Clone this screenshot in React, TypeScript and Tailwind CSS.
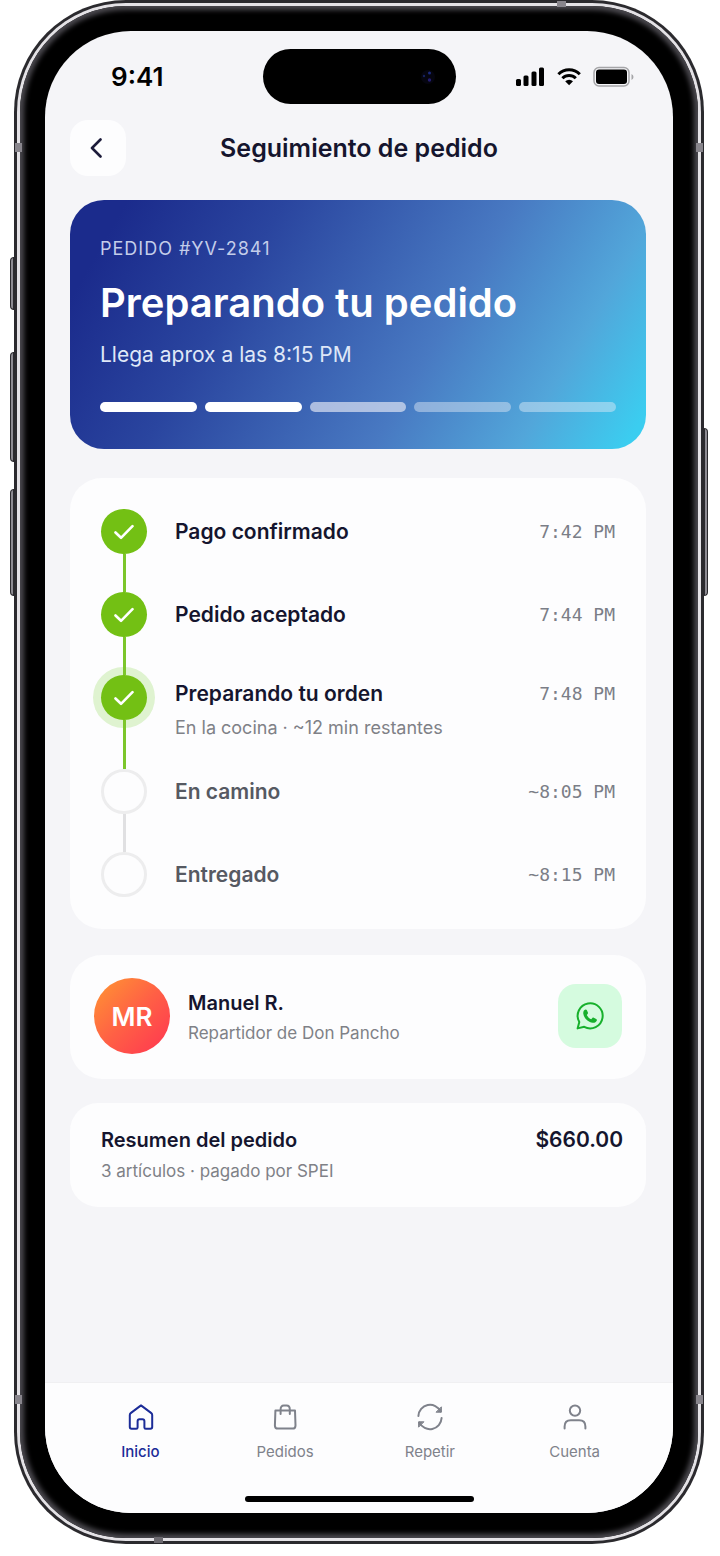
import type { ReactNode } from "react";

type Step = {
  title: string;
  time: string;
  status: "done" | "active" | "pending";
  detail?: string;
};

const steps: Step[] = [
  { title: "Pago confirmado", time: "7:42 PM", status: "done" },
  { title: "Pedido aceptado", time: "7:44 PM", status: "done" },
  { title: "Preparando tu orden", time: "7:48 PM", status: "active", detail: "En la cocina · ~12 min restantes" },
  { title: "En camino", time: "~8:05 PM", status: "pending" },
  { title: "Entregado", time: "~8:15 PM", status: "pending" },
];

const progress = ["bg-white", "bg-white", "bg-[#dde3f2]/70", "bg-[#d5e2f2]/50", "bg-[#d5e8f5]/50"];

const tabs = [
  { label: "Inicio", icon: <HomeIcon />, active: true },
  { label: "Pedidos", icon: <BagIcon />, active: false },
  { label: "Repetir", icon: <RepeatIcon />, active: false },
  { label: "Cuenta", icon: <UserIcon />, active: false },
];

function TabSvg({ children }: { children: ReactNode }) {
  return (
    <svg
      viewBox="0 0 28 28"
      className="w-7 h-7"
      fill="none"
      stroke="currentColor"
      strokeWidth="2"
      strokeLinecap="round"
      strokeLinejoin="round"
      aria-hidden="true"
    >
      {children}
    </svg>
  );
}

function HomeIcon() {
  return (
    <TabSvg>
      <path d="M15 2.4 5 9.9Q3.800 10.800 3.800 12V24q0 1.800 1.800 1.800h4.600q1.400 0 1.400-1.400V18.200q0-1.900 1.900-1.900h3q1.900 0 1.900 1.900v6.200q0 1.400 1.400 1.400h4.600Q26.200 25.800 26.200 24V12q0-1.200-1.200-2.100Z" />
    </TabSvg>
  );
}

function BagIcon() {
  return (
    <TabSvg>
      <path d="M4.400 7.600h19.600l.5 14.800q0 3.200-3 3.200H6.900q-3 0-3-3.200ZM9.600 11V6.400q0-3.800 3.200-3.800h2.800q3.200 0 3.200 3.800V11" />
    </TabSvg>
  );
}

function RepeatIcon() {
  return (
    <TabSvg>
      <path d="M2.400 13A11.700 11.700 0 0 1 24.600 8.400M25.600 15A11.700 11.700 0 0 1 3.400 19.600" />
      <path d="M25.400 4.200v5h-5ZM2.600 23.800v-5h5Z" strokeWidth="1" fill="currentColor" />
    </TabSvg>
  );
}

function UserIcon() {
  return (
    <TabSvg>
      <circle cx="14" cy="7.600" r="5.200" />
      <path d="M3.600 25.600v-2.200q0-6.200 6.200-6.200h8.400q6.200 0 6.200 6.200v2.200" />
    </TabSvg>
  );
}

function StatusIcons() {
  return (
    <svg viewBox="0 0 120 22" className="w-[120px] h-[22px]" aria-hidden="true">
      <rect x="1" y="13" width="5" height="7" rx="1.500" />
      <rect x="8.500" y="9.500" width="5" height="10.500" rx="1.500" />
      <rect x="16.500" y="5.500" width="5" height="14.500" rx="1.500" />
      <rect x="24" y="1.500" width="5" height="18.500" rx="1.500" />
      <g fill="none" stroke="black" strokeWidth="3">
        <path d="M43.400 8.200a15.200 15.200 0 0 1 21.400 0" />
        <path d="M47.400 12.300a9.500 9.500 0 0 1 13.400 0" />
      </g>
      <path d="M50.200 15.300a5.600 5.600 0 0 1 7.800 0l-3.900 3.900Z" />
      <rect x="79" y="1.500" width="35" height="18.500" rx="5" fill="none" stroke="#a5a5a8" strokeWidth="1.500" />
      <rect x="81" y="3.500" width="31" height="14.500" rx="3" />
      <path d="M116.500 8v6q2-.8 2-3t-2-3" fill="#a5a5a8" />
    </svg>
  );
}

function WhatsappIcon() {
  return (
    <svg viewBox="0 0 28 28" className="w-7 h-7" aria-hidden="true">
      <path
        d="M1.600 26.400 3.300 20A12.500 12.500 0 1 1 8.200 24.800Z"
        fill="none"
        stroke="#17b02c"
        strokeWidth="2"
        strokeLinejoin="round"
      />
      <path
        d="M8.500 8.100c.8-.8 2-.7 2.400.2l1 2.300c.2.500.1 1-.3 1.400l-.8 1c.8 1.800 2.400 3.400 4.400 4.300l1.200-1.300c.3-.4.800-.5 1.300-.3l2.500 1.200c.7.400.9 1 .5 1.900-.6 1.500-2.300 2.300-4 2-4.600-.7-8.800-4.800-9.400-9-.2-1.400.2-2.800 1.200-3.700Z"
        fill="#17b02c"
      />
    </svg>
  );
}

function StepRow({ step, next }: { step: Step; next?: Step }) {
  const pending = step.status === "pending";
  const line = step.detail ? "leading-[38px]" : "leading-[45px]";
  return (
    <li className="flex gap-7">
      <div className="flex flex-col items-center shrink-0">
        {pending ? (
          <span className="w-[46px] h-[45px] rounded-full border-[3px] border-[#ededee]" />
        ) : (
          <span
            className={`flex items-center justify-center w-[46px] h-[45px] rounded-full bg-[#73c014] ${
              step.status === "active" ? "ring-8 ring-[#dff3d0]" : ""
            }`}
          >
            <svg viewBox="0 0 20 16" className="w-5 h-4" fill="none" stroke="white" strokeWidth="2.600" strokeLinecap="round" strokeLinejoin="round" aria-hidden="true">
              <path d="m1.500 8.500 5.500 5.300L18.500 2.200" />
            </svg>
          </span>
        )}
        {next && (
          <span className={`relative z-10 w-[3px] flex-1 min-h-[38px] ${pending ? "bg-[#e0e0e2]" : "bg-[#7cc62b]"}`} />
        )}
      </div>
      <div className={`flex-1 min-w-0 ${step.detail ? "pb-[26px]" : ""}`}>
        <div className={`flex justify-between ${line}`}>
          <h2 className={`text-[21px] font-semibold leading-[inherit] ${pending ? "text-[#565962]" : "text-[#15152e]"}`}>
            {step.title}
          </h2>
          <time className="text-lg text-[#7b7e87] font-['DejaVu_Sans_Mono',monospace] leading-[inherit]">{step.time}</time>
        </div>
        {step.detail && <p className="text-lg leading-[30px] text-[#7f8187]">{step.detail}</p>}
      </div>
    </li>
  );
}

export default function App() {
  return (
    <div className="flex flex-col min-h-screen bg-white pl-[14px] pr-4 pb-3 font-['Inter','Liberation_Sans',sans-serif] text-[#15152e]">
      {/* Phone body */}
      <div className="relative flex flex-col flex-1 rounded-[112px] bg-[#2b2a2e] p-[3px]">
        {/* Side buttons */}
        <span className="absolute -left-1 top-[257px] w-1 h-[53px] rounded-l-sm border border-[#2b2a2e] bg-[#8d8b92]" />
        <span className="absolute -left-1 top-[352px] w-1 h-[110px] rounded-l-sm border border-[#2b2a2e] bg-[#8d8b92]" />
        <span className="absolute -left-1 top-[489px] w-1 h-[107px] rounded-l-sm border border-[#2b2a2e] bg-[#8d8b92]" />
        <span className="absolute -right-1 top-[428px] w-1 h-[168px] rounded-r-sm border border-[#2b2a2e] bg-[#8d8b92]" />
        {/* Antenna bands */}
        <span className="absolute z-10 left-px top-[143px] w-[7px] h-[9px] bg-[#88858c]" />
        <span className="absolute z-10 right-px top-[143px] w-[7px] h-[9px] bg-[#88858c]" />
        <span className="absolute z-10 left-px bottom-[140px] w-[7px] h-[9px] bg-[#88858c]" />
        <span className="absolute z-10 right-px bottom-[140px] w-[7px] h-[9px] bg-[#88858c]" />
        <span className="absolute z-10 right-[138px] top-px w-[9px] h-[6px] bg-[#88858c]" />
        <span className="absolute z-10 left-[140px] bottom-px w-[9px] h-[6px] bg-[#6d6a70]" />

        <div className="flex flex-col flex-1 rounded-[109px] bg-[#e4e2e6] p-[3px]">
          <div className="flex flex-col flex-1 rounded-[106px] bg-black p-[25px] shadow-[inset_0_0_5px_4px_#4b494f]">
            <div className="flex flex-col flex-1 rounded-[86px] overflow-hidden bg-[#f5f5f8]">

              {/* Status bar */}
              <div className="grid grid-cols-[1fr_193px_1fr] items-center pt-[18px]">
                <span className="pl-[66px] text-[26px] leading-8 font-semibold text-black">9:41</span>
                <div className="flex items-center justify-end h-[55px] rounded-full bg-black pr-5">
                  <svg viewBox="0 0 16 16" className="w-4 h-4" aria-hidden="true">
                    <circle cx="8" cy="8" r="7" fill="#05050f" />
                    <circle cx="4" cy="7" r="1.200" fill="#16215e" />
                    <circle cx="9.500" cy="4" r="1.500" fill="#1b2a7c" />
                    <circle cx="9.500" cy="11" r="1.700" fill="#241c70" />
                  </svg>
                </div>
                <div className="flex justify-end pr-[38px]">
                  <StatusIcons />
                </div>
              </div>

              {/* Header */}
              <header className="grid grid-cols-[56px_1fr_56px] items-center pt-4 px-[25px]">
                <button type="button" aria-label="Volver" className="flex items-center justify-center w-14 h-14 rounded-[18px] bg-[#fdfdfe] pr-1">
                  <svg viewBox="0 0 12 20" className="w-3 h-5" fill="none" stroke="#1c1b3a" strokeWidth="2.600" strokeLinecap="round" strokeLinejoin="round" aria-hidden="true">
                    <path d="M10.500 1.500 2 10l8.500 8.500" />
                  </svg>
                </button>
                <h1 className="text-center text-[25px] leading-8 font-semibold">Seguimiento de pedido</h1>
              </header>

              <main className="flex flex-col flex-1 pt-6 pb-10 pl-[25px] pr-[27px]">
                {/* Order status */}
                <section className="rounded-[34px] px-[30px] pt-9 pb-[37px] text-white bg-[linear-gradient(120deg,#1b2b8c_8%,#2a459f_30%,#4879c2_62%,#52a6da_82%,#3bcdf0_97%)]">
                  <p className="text-lg leading-[26px] tracking-[1px] text-[#c3cdea]">PEDIDO #YV-2841</p>
                  <p className="mt-[15px] text-[40px] leading-[52px] font-semibold">Preparando tu pedido</p>
                  <p className="mt-3 text-[21px] leading-7 text-[#dfe7f7]">Llega aprox a las 8:15 PM</p>
                  <div className="flex gap-2 mt-[33px]">
                    {progress.map((color, i) => (
                      <span key={i} className={`flex-1 h-[10px] rounded-full ${color}`} />
                    ))}
                  </div>
                </section>

                {/* Timeline */}
                <ol className="mt-[29px] rounded-[32px] bg-[#fdfdfe] px-[31px] pt-[31px] pb-8">
                  {steps.map((step, i) => (
                    <StepRow key={step.title} step={step} next={steps[i + 1]} />
                  ))}
                </ol>

                {/* Driver */}
                <section className="flex items-center mt-[26px] rounded-[32px] bg-[#fdfdfe] px-6 pt-[23px] pb-[25px]">
                  <span className="flex items-center justify-center w-[76px] h-[76px] shrink-0 rounded-full text-[26px] font-semibold text-white bg-[linear-gradient(135deg,#ff8c36_10%,#ff6045_50%,#ff3d4f_90%)]">
                    MR
                  </span>
                  <div className="flex-1 min-w-0 ml-[18px] pt-1">
                    <h2 className="text-xl leading-[30px] font-semibold">Manuel R.</h2>
                    <p className="text-[17px] leading-[30px] text-[#7f8187]">Repartidor de Don Pancho</p>
                  </div>
                  <button type="button" aria-label="Escribir por WhatsApp" className="flex items-center justify-center w-16 h-16 rounded-[18px] bg-[#d5fbdf]">
                    <WhatsappIcon />
                  </button>
                </section>

                {/* Summary */}
                <section className="flex justify-between mt-6 rounded-[28px] bg-[#fdfdfe] pl-[31px] pr-[23px] pt-[22px] pb-5">
                  <div>
                    <h2 className="text-xl leading-[30px] font-semibold">Resumen del pedido</h2>
                    <p className="text-[17px] leading-8 text-[#7f8187]">3 artículos · pagado por SPEI</p>
                  </div>
                  <p className="text-[21px] leading-[30px] font-semibold">$660.00</p>
                </section>
              </main>

              {/* Tab bar */}
              <footer className="border-t border-[#f0f0f2] bg-[#fdfdfe]">
                <nav className="grid grid-cols-4 pl-[23px] pr-[26px] pt-5">
                  {tabs.map((tab) => (
                    <a
                      key={tab.label}
                      href="#"
                      aria-current={tab.active ? "page" : undefined}
                      className={`flex flex-col items-center gap-[9px] text-[15px] leading-6 ${
                        tab.active ? "text-[#1c2c98] font-medium" : "text-[#7f828b]"
                      }`}
                    >
                      {tab.icon}
                      {tab.label}
                    </a>
                  ))}
                </nav>
                <div className="w-[229px] h-[6px] mx-auto mt-8 mb-[11px] rounded-full bg-black" />
              </footer>

            </div>
          </div>
        </div>
      </div>
    </div>
  );
}
